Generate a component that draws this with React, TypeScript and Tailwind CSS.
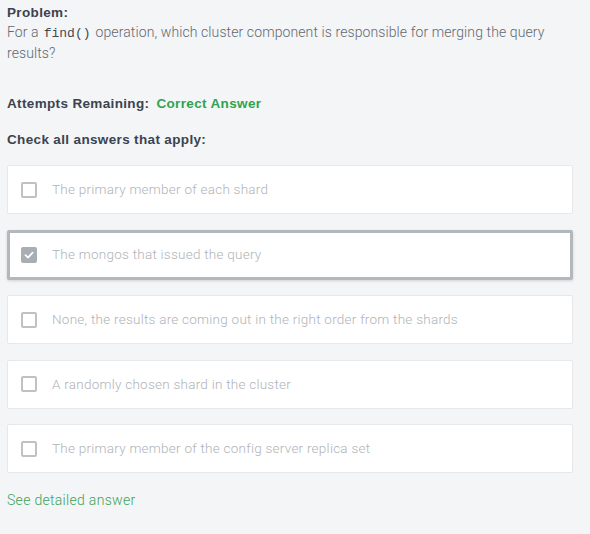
import React from "react";

const options = [
  { text: "The primary member of each shard", checked: false },
  { text: "The mongos that issued the query", checked: true },
  { text: "None, the results are coming out in the right order from the shards", checked: false },
  { text: "A randomly chosen shard in the cluster", checked: false },
  { text: "The primary member of the config server replica set", checked: false },
];

function Box({ checked }: { checked: boolean }) {
  if (checked) {
    return (
      <span className="flex h-4 w-4 shrink-0 items-center justify-center rounded-[2px] bg-[#a8aeb4]">
        <svg width="12" height="12" viewBox="0 0 12 12" fill="none">
          <path d="M2.5 6.2 L5 8.6 L9.6 3.6" stroke="#fff" strokeWidth="1.8" strokeLinecap="round" strokeLinejoin="round" />
        </svg>
      </span>
    );
  }
  return <span className="h-4 w-4 shrink-0 rounded-[2px] border-2 border-[#bfc1c3] bg-white" />;
}

export default function App() {
  return (
    <div className="min-h-[534px] w-[590px] bg-[#f4f5f7] px-[7px] pt-[4px] font-['Roboto',sans-serif]">
      <div className="text-[13.5px] font-bold leading-[18px] text-[#3b4350] font-['Liberation_Sans',sans-serif] tracking-[0.35px]">
        Problem:
      </div>
      <p className="w-[560px] text-[14px] leading-[21px] text-[#62686f] font-light tracking-[0.1px]">
        For a<span className="mx-[5px] font-['Liberation_Mono',monospace] text-[13px] leading-none tracking-normal text-[#444a52]">find()</span>operation, which cluster component is responsible for merging the query results?
      </p>
      <div className="mt-[31px] flex gap-[7px] text-[13.5px] font-bold leading-[18px] font-['Liberation_Sans',sans-serif] tracking-[0.35px]">
        <span className="text-[#3b4350]">Attempts Remaining:</span>
        <span className="text-[#2ea44f]">Correct Answer</span>
      </div>
      <div className="mt-[18px] text-[13.5px] font-bold leading-[18px] text-[#3b4350] font-['Liberation_Sans',sans-serif] tracking-[0.35px]">
        Check all answers that apply:
      </div>
      <div className="mt-[16px] flex w-[566px] flex-col gap-[15.5px]">
        {options.map((o, i) => (
          <div
            key={i}
            className={
              o.checked
                ? "flex h-[50px] items-center gap-[15px] rounded-[2px] border-[3px] border-[#b3b8bd] bg-white pl-[11px] shadow-[0_1px_3px_rgba(0,0,0,0.15)]"
                : "flex h-[49px] items-center gap-[15px] rounded-[2px] border border-[#e6e8ea] bg-white pl-[13px]"
            }
          >
            <Box checked={o.checked} />
            <span className="text-[13.5px] font-light text-[#b0b3b7] tracking-[0.25px]">{o.text}</span>
          </div>
        ))}
      </div>
      <div className="mt-[17px] text-[14px] font-light text-[#3aa45a] tracking-[0.3px]">See detailed answer</div>
    </div>
  );
}
